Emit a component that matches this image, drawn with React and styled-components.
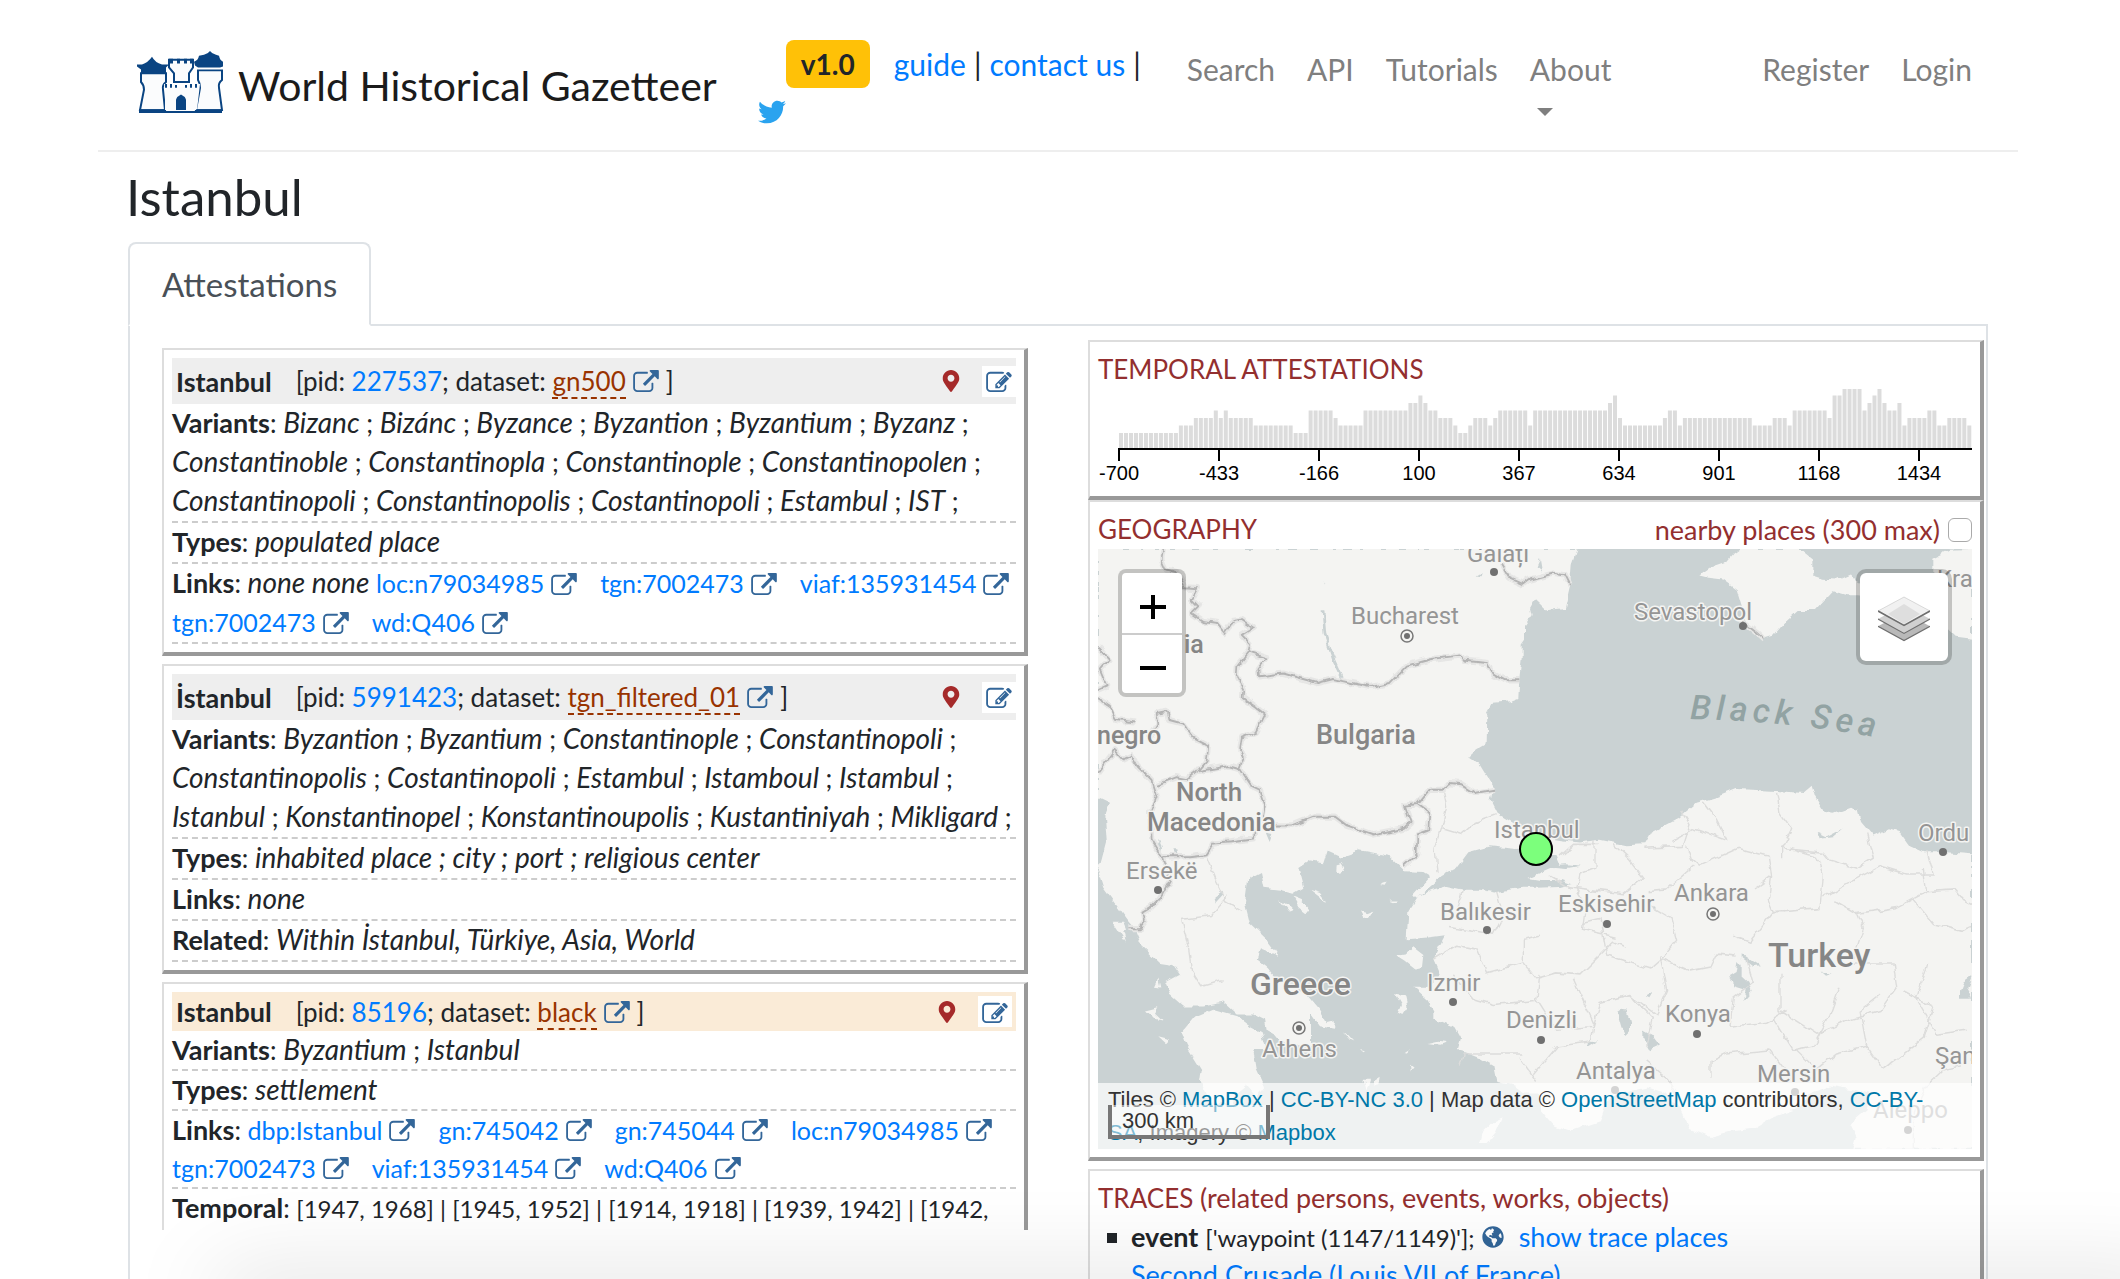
import React from "react";
import styled, { createGlobalStyle, css } from "styled-components";
import { FaTwitter, FaMapMarkerAlt, FaGlobeAmericas } from "react-icons/fa";

const GlobalStyle = createGlobalStyle`
  *, *::before, *::after { box-sizing: border-box; }
  body {
    margin: 0;
    background: #fff;
    color: #212529;
    font-family: Lato, "Noto Sans", sans-serif;
    font-size: 26px;
    line-height: 39px;
  }
  a { color: #007bff; text-decoration: none; }
  button { font: inherit; color: inherit; background: none; border: 0; padding: 0; cursor: pointer; }
  h1, h2, p, ul { margin: 0; padding: 0; font-weight: 400; }
`;

const Page = styled.div`
  height: 100vh;
  overflow: hidden;
  padding: 0 102px 0 98px;
  display: flex;
  flex-direction: column;
`;

/* ---------- header ---------- */

const Header = styled.header`
  flex: none;
  display: flex;
  align-items: flex-start;
  height: 152px;
  padding: 40px 46px 0 38px;
  border-bottom: 2px solid #eee;
`;

const Brand = styled.a`
  display: flex;
  align-items: flex-start;
  gap: 14px;
  padding-top: 10px;
  color: #1b1b1b;
  font-size: 41px;
  line-height: 72px;
  white-space: nowrap;
`;

const Meta = styled.div`
  display: flex;
  flex-direction: column;
  margin-left: 41px;
  font-size: 30px;
`;

const MetaLine = styled.div`
  display: flex;
  align-items: center;
  gap: 8px;
  height: 48px;
  padding-left: 28px;
  white-space: nowrap;
`;

const Version = styled.span`
  width: 84px;
  margin-right: 16px;
  border-radius: 8px;
  background: #ffc107;
  font-size: 28px;
  font-weight: 700;
  line-height: 48px;
  text-align: center;
`;

const TwitterLink = styled.a`
  display: flex;
  margin-top: 10px;
  color: #2aa3ef;
  font-size: 28px;
`;

const Nav = styled.nav`
  display: flex;
  flex: 1;
  gap: 32px;
  margin-left: 46px;
  padding-top: 10px;
  font-size: 30px;
  white-space: nowrap;
`;

const NavLink = styled.a`
  color: #7f7f7f;
  ${(p) => p.$pushed && css`margin-left: auto;`}
`;

const NavToggle = styled.button`
  display: flex;
  flex-direction: column;
  align-items: flex-start;
  color: #7f7f7f;
  line-height: 39px;
  &::after {
    content: "";
    margin: 19px 0 0 7px;
    border: 8px solid transparent;
    border-top-color: #7f7f7f;
    border-bottom: 0;
  }
`;

/* ---------- page body ---------- */

const PageTitle = styled.h1`
  flex: none;
  padding: 16px 28px 0;
  font-size: 51px;
  line-height: 58px;
`;

const Tabs = styled.div`
  flex: none;
  display: flex;
  margin: 16px 30px 0;
  border-bottom: 2px solid #dee2e6;
`;

const Tab = styled.button`
  height: 84px;
  margin-bottom: -2px;
  padding: 0 32px;
  border: 2px solid #dee2e6;
  border-bottom-color: #fff;
  border-radius: 8px 8px 0 0;
  background: #fff;
  color: #495057;
  font-size: 33px;
`;

const TabPanel = styled.main`
  flex: 1;
  display: grid;
  grid-template-columns: 866fr 896fr;
  align-items: start;
  column-gap: 60px;
  min-height: 0;
  margin: 0 30px;
  padding: 0 2px 0 32px;
  border: 2px solid #dee2e6;
  border-width: 0 2px;
`;

const Records = styled.section`
  display: flex;
  flex-direction: column;
  gap: 8px;
  max-height: calc(100vh - 397px);
  margin-top: 22px;
  overflow: hidden;
`;

const Card = styled.article`
  flex: none;
  padding: 8px;
  border: solid #999;
  border-width: 2px 4px 4px 2px;
  border-top-color: #ddd;
  border-left-color: #ddd;
  background: #fff;
  line-height: ${(p) => (p.$core ? 38 : 39)}px;
`;

const RecordHead = styled.header`
  display: flex;
  align-items: center;
  height: ${(p) => (p.$core ? 39 : 46)}px;
  padding: 0 ${(p) => (p.$core ? 4 : 0)}px 0 4px;
  background: ${(p) => (p.$core ? "#faebd7" : "#eee")};
  white-space: nowrap;
`;

const Name = styled.h2`
  margin-right: 24px;
  font-size: 27px;
  font-weight: 700;
`;

const DatasetLink = styled.a`
  color: #993300;
  border-bottom: 2px dashed #993300;
`;

const Actions = styled.div`
  display: flex;
  align-items: center;
  gap: 20px;
  margin-left: auto;
  color: #a52a2a;
  font-size: 22px;
  line-height: 0;
`;

const EditButton = styled.button`
  display: flex;
  align-items: center;
  justify-content: center;
  width: 34px;
  height: 31px;
  background: #fff;
`;

const Row = styled.div`
  min-height: ${(p) => (p.$open ? 80 : 40)}px;
  border-bottom: 2px dashed #ccc;
`;

const Line = styled.p`
  display: flex;
  gap: ${(p) => (p.$links ? 23 : 7)}px;
  white-space: nowrap;
`;

const Label = styled.b`
  font-size: 27px;
  font-weight: 700;
  line-height: 1;
`;

const Value = styled.i`
  font-size: 28px;
  line-height: 1;
`;

const Spans = styled.span`
  font-size: 24px;
  line-height: 1;
`;

const OutLink = styled.a`
  display: inline-flex;
  align-items: center;
  gap: 7px;
  font-size: 25px;
`;

/* ---------- right column ---------- */

const Side = styled.section`
  display: flex;
  flex-direction: column;
  margin-top: 14px;
`;

const Block = styled(Card)`
  margin-top: ${(p) => (p.$apart ? 8 : 0)}px;
`;

const BlockHead = styled.div`
  display: flex;
  align-items: center;
  justify-content: space-between;
  color: #932f2f;
`;

const BlockTitle = styled.h2`
  font-size: 26px;
`;

const BlockNote = styled.span`
  font-size: 27px;
  line-height: 1;
`;

const Nearby = styled.label`
  display: flex;
  align-items: center;
  gap: 8px;
  font-size: 27px;
`;

const Check = styled.input`
  appearance: none;
  width: 24px;
  height: 24px;
  margin: 0;
  border: 1px solid #aaa;
  border-radius: 6px;
  background: #fff;
`;

const ChartSvg = styled.svg`
  display: block;
  width: 100%;
  height: 99px;
  font: 20px "Liberation Sans", Arial, sans-serif;
`;

const MapFrame = styled.div`
  position: relative;
  height: 600px;
  overflow: hidden;
  background: #cad2d3;
  font: 22px/33px "Liberation Sans", Arial, sans-serif;
`;

const MapSvg = styled.svg`
  display: block;
  width: 100%;
  height: 100%;
  font-family: Roboto, "Noto Sans", sans-serif;
`;

const MapControl = styled.div`
  position: absolute;
  top: 20px;
  ${(p) => (p.$right ? "right: 20px;" : "left: 20px;")}
  border: 4px solid rgba(0, 0, 0, 0.2);
  border-radius: ${(p) => (p.$right ? 10 : 8)}px;
  background: #fff;
  background-clip: padding-box;
`;

const ZoomButton = styled.button`
  display: flex;
  align-items: center;
  justify-content: center;
  width: 60px;
  height: 60px;
  padding: 8px 0 0 2px;
  & + & { border-top: 2px solid #ccc; }
`;

const LayersButton = styled.button`
  display: flex;
  align-items: center;
  justify-content: center;
  width: 88px;
  height: 88px;
`;

const Attribution = styled.div`
  position: absolute;
  left: 0;
  right: 0;
  bottom: 0;
  padding: 0 10px;
  background: rgba(255, 255, 255, 0.7);
  color: #333;
  a { color: #0078a8; }
`;

const ScaleBar = styled.div`
  position: absolute;
  left: 10px;
  bottom: 10px;
  width: 162px;
  height: 34px;
  padding: 0 10px;
  border: 4px solid #777;
  border-top: 0;
  background: rgba(255, 255, 255, 0.5);
  color: #333;
  line-height: 32px;
`;

const Traces = styled.ul`
  padding-left: 33px;
  list-style: none;
`;

const Trace = styled.li`
  font-size: 27px;
  line-height: 38px;
  white-space: nowrap;
`;

const TraceLine = styled.div`
  display: flex;
  align-items: center;
  gap: 7px;
  &::before {
    content: "";
    width: 10px;
    height: 10px;
    margin: 2px 7px 0 -24px;
    background: #212529;
  }
  svg { color: #336699; font-size: 22px; }
`;

const TraceDetail = styled.span`
  font-size: 24px;
  line-height: 1;
`;

const TraceShow = styled.a`
  margin-left: 8px;
`;

const BottomShade = styled.div`
  position: fixed;
  left: 216px;
  right: -60px;
  bottom: -40px;
  height: 40px;
  box-shadow: 0 0 90px rgba(0, 0, 0, 0.17);
  pointer-events: none;
`;

/* ---------- icons ---------- */

const ExternalIcon = () => (
  <svg width="26" height="22" viewBox="0 0 1792 1536" fill="#336699" aria-hidden="true">
    <path d="M1408 928v320q0 119-84.500 203.500t-203.500 84.500h-832q-119 0-203.500-84.500t-84.500-203.500v-832q0-119 84.500-203.500t203.500-84.500h704q14 0 23 9t9 23v64q0 14-9 23t-23 9h-704q-66 0-113 47t-47 113v832q0 66 47 113t113 47h832q66 0 113-47t47-113v-320q0-14 9-23t23-9h64q14 0 23 9t9 23zm384-864v512q0 26-19 45t-45 19-45-19l-176-176-652 652q-10 10-23 10t-23-10l-114-114q-10-10-10-23t10-23l652-652-176-176q-19-19-19-45t19-45 45-19h512q26 0 45 19t19 45z" />
  </svg>
);

const EditIcon = () => (
  <svg width="26" height="22" viewBox="0 0 1792 1536" fill="#336699" aria-hidden="true">
    <path d="M888 1184l116-116-152-152-116 116v56h96v96h56zm440-720q-16-16-33 1l-350 350q-17 17-1 33t33-1l350-350q17-17 1-33zm80 594v190q0 119-84.500 203.500t-203.500 84.500h-832q-119 0-203.500-84.500t-84.500-203.500v-832q0-119 84.500-203.500t203.500-84.500h832q63 0 117 25 15 7 18 23 3 17-9 29l-49 49q-14 14-32 8-23-6-45-6h-832q-66 0-113 47t-47 113v832q0 66 47 113t113 47h832q66 0 113-47t47-113v-126q0-13 9-22l64-64q15-15 35-7t20 29zm-96-738l288 288-672 672h-288v-288zm444 132l-92 92-288-288 92-92q28-28 68-28t68 28l152 152q28 28 28 68t-28 68z" />
  </svg>
);

const CastleLogo = () => (
  <svg width="88" height="64" viewBox="0 0 88 66" preserveAspectRatio="none" aria-hidden="true">
    <g fill="#fbfcfd" stroke="#0a4482" strokeWidth="2">
      <path d="M5 24h25v9q-4 3-3 8l2 21H4l4-21q0-5-3-8z" />
      <path d="M62 21h24v10q-4 3-3 8l3 23H60l4-23q0-5-2-8z" />
      <path d="M33 10h24v8l-4 6v9H38v-9l-5-6z" />
    </g>
    <path d="M29 41l-1-6h4v4h5v-4h4v3h9v-3h4v4h5v-4h5l-3 27H29z" fill="#fbfcfd" />
    <path d="M30 35v4M35 35v4M40 36v3M50 36v3M55 35v4M60 35v4" stroke="#0a4482" strokeWidth="2" />
    <g fill="#0a4482">
      <path d="M1 15h5q6-2 10-8 3 6 10 8h7l-3 3v6H5v-4l-4-3z" />
      <path d="M58 12q4-1 5-6l5-1q4-1 6-4 2 3 6 4l3 1q1 5 4 6v5l-3 1H62l-3-2z" />
      <path d="M33 9h4v5h-4zM41 9h3v5h-3zM48 9h3v5h-3zM54 9h3v5h-3z" />
      <path d="M40 62V51q1-3 5-5 4 2 5 5v11z" />
      <path d="M3 61h26v4H3zM60 61h26v4H60zM3 63h83v2H3z" />
    </g>
  </svg>
);

const LayersIcon = () => (
  <svg width="52" height="52" viewBox="0 0 26 26" aria-hidden="true">
    <g stroke="#6f6f6f" strokeWidth="0.600">
      <path d="M0 17.600l13-7 13 7-13 7.200z" fill="#b9b9b9" stroke="none" />
      <path d="M0 17.600l13 7.200 13-7.200" fill="none" />
      <path d="M0 14l13-7 13 7-13 7.200z" fill="#d0d0d0" stroke="none" />
      <path d="M0 14l13 7.200L26 14" fill="none" />
      <path d="M0 10l13-7 13 7-13 7.200z" fill="#f1f1f1" stroke="#aaa" strokeWidth="0.200" />
      <path d="M5 11.500l8-5 8 5-8 5z" fill="#dedede" stroke="none" />
      <path d="M0 10l13 7.200L26 10" fill="none" strokeWidth="0.800" />
    </g>
  </svg>
);

/* ---------- temporal chart ---------- */

// [count, level] runs, one bar for each step of the time line
const RUNS = [
  [12, 2], [3, 3], [4, 4], [1, 5], [1, 4], [1, 5], [5, 4], [8, 3], [3, 2], [5, 5], [1, 4], [5, 3],
  [9, 5], [2, 6], [1, 7], [1, 6], [2, 5], [3, 4], [1, 3], [2, 2], [1, 3], [3, 4], [1, 3], [1, 4],
  [6, 5], [1, 3], [15, 5], [1, 6], [1, 7], [1, 4], [8, 3], [1, 4], [2, 5], [1, 3], [14, 4], [4, 3],
  [3, 4], [1, 3], [7, 5], [1, 4], [2, 7], [4, 8], [1, 5], [1, 6], [1, 7], [1, 8], [1, 6], [2, 5],
  [1, 6], [1, 3], [4, 4], [2, 5], [2, 3], [4, 4], [1, 3],
];
const LEVELS = RUNS.flatMap(([count, level]) => Array(count).fill(level));
const TICKS = ["-700", "-433", "-166", "100", "367", "634", "901", "1168", "1434"];

const TemporalChart = () => (
  <ChartSvg viewBox="0 0 874 99">
    {LEVELS.map((level, i) => (
      <rect key={i} x={21 + i * 4.99} y={59 - level * 7.5} width="4" height={level * 7.5} fill="#dcdcdc" />
    ))}
    <rect x="20" y="59" width="854" height="2" />
    {TICKS.map((tick, i) => (
      <g key={tick}>
        <rect x={20 + i * 100} y="59" width="2" height="13" />
        <text x={21 + i * 100} y="91" textAnchor="middle">{tick}</text>
      </g>
    ))}
  </ChartSvg>
);

/* ---------- map ---------- */

const LAND = [
  // Balkans and mainland Greece
  "M54 23H1490L1475 60 1470 115 1455 172 1400 178 1365 150 1350 172 1355 190 1335 215 1335 250 1325 262 1325 300 1318 350 1315 400 1290 408 1240 412 1222 440 1220 515 1190 530 1165 550 1200 570 1240 625 1232 660 1250 690 1300 715 1368 745 1372 778 1310 782 1230 775 1165 790 1130 830 1085 850 1060 870 1010 905 1000 897 1050 850 1030 840 975 838 930 800 840 785 780 803 740 788 730 815 690 810 655 830 670 880 640 895 600 885 550 880 540 840 505 855 495 920 510 970 560 1010 600 1055 540 1035 530 1060 560 1080 600 1120 680 1150 720 1190 740 1220 765 1215 762 1236 720 1230 690 1195 690 1285 620 1270 560 1240 555 1215 520 1200 470 1200 430 1170 370 1180 310 1180 270 1150 255 1120 300 1100 280 1075 240 1070 190 1030 170 990 140 960 70 880 55 840 80 760 75 700 90 665 54 650Z",
  // Peloponnese
  "M305 1245L340 1210 400 1188 470 1205 510 1230 545 1245 562 1290 520 1290 530 1340 555 1385 530 1410 500 1380 470 1400 455 1440 425 1420 400 1432 380 1410 360 1370 365 1340 320 1280Z",
  // Anatolia
  "M2676 795L2600 790 2530 790 2490 775 2460 740 2430 732 2380 750 2340 710 2330 680 2310 675 2260 690 2230 685 2205 650 2195 622 2170 640 2090 635 1970 630 1910 650 1850 665 1800 700 1710 740 1690 770 1640 772 1560 758 1500 765 1450 760 1385 752 1378 785 1430 800 1440 820 1400 835 1345 855 1380 860 1440 860 1475 870 1440 878 1370 880 1330 880 1290 885 1240 892 1200 885 1150 885 1100 875 1060 885 1015 900 985 940 980 1010 1050 1005 1095 1000 1070 1040 1060 1060 1080 1100 1050 1130 1000 1130 1040 1160 1060 1190 1060 1210 1120 1230 1140 1260 1130 1290 1170 1300 1200 1310 1240 1330 1250 1370 1300 1380 1330 1400 1380 1400 1380 1440 1420 1480 1470 1495 1560 1470 1580 1420 1620 1400 1700 1385 1760 1400 1800 1440 1830 1490 1890 1510 1960 1495 2020 1490 2080 1460 2150 1440 2190 1400 2250 1380 2320 1390 2370 1400 2360 1440 2310 1475 2330 1510 2320 1540 2676 1540Z",
  // Crimea and the Kuban coast
  "M1855 90L1890 70 1940 55 1960 35 1980 23 2160 23 2200 50 2200 90 2230 98 2270 100 2310 85 2340 112 2420 115 2470 120 2520 150 2560 160 2560 45 2610 25 2676 23 2676 250 2630 245 2600 220 2520 190 2420 150 2340 140 2300 140 2260 130 2205 180 2150 180 2110 210 2080 240 2040 250 2010 230 1990 180 1970 125 1930 100 1880 95Z",
  // islands
  "M600 912l20 8 20 18-12 4zM640 905l25 8 25 26-12 2-22-14zM690 885l30 8 18 20-10-4zM770 820l15-2 8 12-10 14-14-8zM840 940l25 4 18-6-12 16-20 2zM925 912h25l-5 6zM900 870l20-6-6 8zM950 1050l30-4 20-16 30 20-4 30-20 4-30-20zM945 1150l30 4 8 30-16 20-14-6 10-22zM785 1240l20 12 15 14-10-4zM1045 1275l30-6 26 4-20 6zM850 1365l20 0-10 30zM880 1370l22-12-4 24-14 2zM970 1295l20-6-10 8zM1200 1525l10-30 30-25 25-10-20 40-25 25zM98 968l30 0 10 20-8 6 8 25-20-25zM195 1190l40-8-10 14 25 20-30-6zM225 1130l10-18 6 20zM235 1255l35 8-12 10zM840 1290l18 4-8 4zM990 1330l14 10-12 4z",
];

const WATER = [
  "M1640 1190l10 30 0 20-14 12-12-20-12-36 14-8zM1690 1240l30 14 20 22-30 12-20-30zM1518 1280l20-16 16 2-26 14zM1975 1065l10 10 0 30 20 15 10 20-25 24 10-25-40-10-10-26 20-10zM1985 1048l25 14 30 16-20 2-35-22zM2225 1092l30 2-20 6zM2640 1140l10-20 26-16-14 32 14 22-36 0zM1695 1155l20-10-10 14zM2210 740l30 12 50-22-30 22-40 4zM1390 825l70-5 40 4-40 6zM725 178l8 0 6 60 20 50 32 60-8 2-28-50-24-60zM728 105l8 6-4 2zM400 905l28-18 2 6-26 24zM236 760l10 20-4 18-10-8zM280 780l12 0 4 16-10 4zM560 740l20 4-8 20zM1370 70l10-20 6 30zM1190 90l16-8-4 10zM1720 925l12 6-8 4z",
];

const COUNTRY_LINES = [
  "M250 23L245 50 258 75 290 82 315 120 352 122 335 150 355 168 335 185 370 205 412 210 436 235 460 205 485 202 520 222 485 240 510 262 505 285 560 300 538 325 540 345 610 338 712 362 760 352 870 372 930 362 980 318 1050 302 1140 292 1150 305 1225 312 1240 338 1275 355 1318 355",
  "M505 285L472 320 470 345 490 375 488 400 530 425 555 442 530 485 485 500 480 530 492 550 478 580 445 572 355 585 380 560 385 520 340 500 310 465 265 455 260 435 230 440 235 465 210 500",
  "M54 400L90 420 110 455 165 462M54 590L105 532 130 555 155 545 175 575 215 610 230 650 212 690 215 760 245 800 330 800 380 795 405 765 455 762 520 755 520 728M230 620L290 600 320 605 350 585M478 580L510 620 540 632 555 670 548 705 570 722 635 722 700 700 765 700 800 722 880 745 975 728 992 715 975 672 1012 668 1048 632 1090 632 1110 615 1145 618 1185 640 1242 632",
  "M1012 668L1048 690 1045 735 1012 745 1010 795 970 825M245 800L270 860 240 905 210 930 190 940 195 965 180 982 145 982M54 270L92 305 70 320 60 330 80 370 54 380",
  "M1260 60L1285 95 1330 112 1345 102 1420 85 1455 90 1470 115",
  "M1985 205L2030 235 2050 250",
];

const PROVINCE_LINES = [
  "M1090 635l10 40-15 55-20 50 6 60M1085 730l60 15 40-30 65-20M445 900l-50 50-90 10 20 70 10 60 30 40 60-15M380 805l30 60 30 50 50 25",
  "M1545 760l0 70-45 15-10 40 30 40-10 60 50 10 50 10M1600 770l50 40 40 45-60 40-90-10M1690 780l120-5 20-55-25-35M1780 760l60-30 100 30-30-50-40-45M1820 775l15 35 20 15 120-45M1840 825l-80 60-60 5M2090 640l10 50 35 40-30 50 0 30M2100 780l130 10 20 20 80 20 50-25-20-60M1975 780l90 20 10 50-50 30M2075 850l-10 60 15 30 140-10 10-80-20-50-80-20M2230 905l60-30 110-50 80 20 80 0-20-60M2260 910l70 35 120-15 90-40-10-60M2540 890l80-5 20 20 36 15M1960 1000l50 15 70-75 30 0M1510 970l50-10 20 90 130 35 40-30 40-40-20-60-60-30M1380 1000l-50 10 0 60 40 40 60-15 70 5 60-50 40-35 40 15M1380 1100l-10 60 60 80 110-10 20-60 90-20 80 50 30-60-20-90M1370 1165l-130 10-60-15-60-60M1060 1060l70-35 60 10 30 60 110-25M1480 1110l60 110-10 50-100 10-70 70M1660 1160l60 50-20 70M1750 1060l80 30 60-10 20-35 60 5M2320 1070l120 0 10 60-50 60-80 20-110 40-110-60 0-90M2000 1060l20 60-60 40-10 70 110-10 60-30M2080 1210l60 80 60-10 50-80 30-70M1890 1360l0-40 50-20 130-10 70 80M2150 1290l60 50 60-40 90-20 50 60 120-80 30-80-90-40M2360 1280l-20-90 60-40M2540 1070l-30 90 60 90 90-10M2500 910l60 60 90 20 26-10M2320 1060l30-80-20-40M1250 890l20 60-30 50-130-20M1150 885l-20 60M1330 1300l-180 0-10 30M1320 1310l50 60M1700 1320l60 40 40 60",
  "M2500 1540l0-90 40-70 50-40 50-10M1440 800l40-30 80 0M1410 850l60 30 90 10",
];

const COUNTRIES = [
  [218, 195, 27, "Bulgaria"], [78, 252, 26, "North"], [49, 282, 26, "Macedonia"],
  [-1, 195, 25, "negro"], [86, 104, 25, "ia"], [152, 446, 32, "Greece"], [670, 418, 34, "Turkey"],
];

const CITIES = [
  [253, 75, "Bucharest", 309, 87, true], [369, 13, "Galați", 396, 23], [28, 330, "Ersekë", 60, 341],
  [164, 508, "Athens", 201, 479, true], [396, 289, "Istanbul"], [342, 371, "Balıkesir", 389, 381],
  [329, 442, "Izmir", 355, 453], [408, 479, "Denizli", 443, 491], [460, 363, "Eskisehir", 509, 375],
  [576, 352, "Ankara", 615, 365, true], [567, 473, "Konya", 599, 485], [478, 530, "Antalya", 517, 541],
  [659, 533, "Mersin", 697, 543], [536, 71, "Sevastopol", 645, 77], [820, 292, "Ordu", 845, 303],
  [837, 515, "Şan"], [775, 569, "Aleppo", 810, 581], [839, 38, "Kra"],
];

const MapDrawing = () => (
  <MapSvg viewBox="0 0 874 600" preserveAspectRatio="xMidYMid slice" role="img" aria-label="Map">
    <defs>
      <filter id="coast" x="0" y="0" width="100%" height="100%">
        <feTurbulence type="fractalNoise" baseFrequency="0.090" numOctaves="2" seed="4" result="n" />
        <feDisplacementMap in="SourceGraphic" in2="n" scale="7" xChannelSelector="R" yChannelSelector="G" />
      </filter>
      <path id="sea" d="M592 170q100 2 195 20" />
    </defs>
    <g filter="url(#coast)">
      <rect width="874" height="600" fill="#cad2d3" />
      <g transform="scale(0.33333 0.39541) translate(-54 -23)" strokeLinejoin="round" fill="none">
        {LAND.map((d) => <path key={d} d={d} fill="#f4f4f2" />)}
        {WATER.map((d) => <path key={d} d={d} fill="#cad2d3" />)}
        {PROVINCE_LINES.map((d) => <path key={d} d={d} stroke="#dcdcdb" strokeWidth="4" />)}
        {COUNTRY_LINES.map((d) => <path key={d} d={d} stroke="#e6e6e5" strokeWidth="16" />)}
        {COUNTRY_LINES.map((d) => <path key={d} d={d} stroke="#b4b4b4" strokeWidth="5" />)}
      </g>
    </g>
    <g stroke="#f4f4f2" strokeWidth="3" paintOrder="stroke" strokeLinejoin="round">
      {CITIES.map(([x, y, name]) => <text key={name} x={x} y={y} fontSize="24" fill="#959595">{name}</text>)}
      {COUNTRIES.map(([x, y, size, name]) => (
        <text key={name} x={x} y={y} fontSize={size} fontWeight="500" fill="#868686">{name}</text>
      ))}
    </g>
    {CITIES.filter((c) => c[3]).map(([, , name, x, y, capital]) => (
      <g key={name}>
        {capital && <circle cx={x} cy={y} r="6" fill="#f4f4f2" stroke="#777" strokeWidth="1.500" />}
        <circle cx={x} cy={y} r={capital ? 3 : 4} fill="#707070" />
      </g>
    ))}
    <text fontSize="34" fontStyle="italic" fontWeight="500" letterSpacing="5" fill="#92a3a3">
      <textPath href="#sea">Black Sea</textPath>
    </text>
    <circle cx="438" cy="300" r="16" fill="#7cff7c" stroke="#000" strokeWidth="2" />
  </MapSvg>
);

/* ---------- records ---------- */

const Out = ({ children }) => (
  <OutLink href="#">{children}<ExternalIcon /></OutLink>
);

const Names = ({ label, lines }) => (
  <Row>
    {lines.map((names, i) => (
      <Line key={i}>
        <span>
          {i === 0 && <><Label>{label}</Label>: </>}
          {names.map((name, n) => (
            <React.Fragment key={name}>
              <Value>{name}</Value>
              {(n < names.length - 1 || lines.length > 1) && " ; "}
            </React.Fragment>
          ))}
        </span>
      </Line>
    ))}
  </Row>
);

const Field = ({ label, children }) => (
  <Row><Line><span><Label>{label}</Label>: <Value>{children}</Value></span></Line></Row>
);

const Links = ({ none, lines }) => (
  <Row>
    {lines.map((links, i) => (
      <Line key={i} $links>
        {links.map((link, n) =>
          i === 0 && n === 0 ? (
            <span key={link}><Label>Links</Label>: {none && <Value>{none} </Value>}<Out>{link}</Out></span>
          ) : (
            <Out key={link}>{link}</Out>
          )
        )}
      </Line>
    ))}
  </Row>
);

const Record = ({ name, pid, dataset, core, children }) => (
  <Card $core={core}>
    <RecordHead $core={core}>
      <Name>{name}</Name>
      <Line>
        <span>[pid: <a href="#">{pid}</a>; dataset: <DatasetLink href="#">{dataset}</DatasetLink></span>
        <OutLink href="#" aria-label="Open dataset"><ExternalIcon /></OutLink>
        <span>]</span>
      </Line>
      <Actions>
        <FaMapMarkerAlt />
        <EditButton aria-label="Edit"><EditIcon /></EditButton>
      </Actions>
    </RecordHead>
    {children}
  </Card>
);

export default function App() {
  return (
    <Page>
      <GlobalStyle />
      <Header>
        <Brand href="#"><CastleLogo />World Historical Gazetteer</Brand>
        <Meta>
          <MetaLine>
            <Version>v1.0</Version>
            <a href="#">guide</a><span>|</span><a href="#">contact us</a><span>|</span>
          </MetaLine>
          <TwitterLink href="#" aria-label="Twitter"><FaTwitter /></TwitterLink>
        </Meta>
        <Nav>
          <NavLink href="#">Search</NavLink>
          <NavLink href="#">API</NavLink>
          <NavLink href="#">Tutorials</NavLink>
          <NavToggle>About</NavToggle>
          <NavLink href="#" $pushed>Register</NavLink>
          <NavLink href="#">Login</NavLink>
        </Nav>
      </Header>
      <PageTitle>Istanbul</PageTitle>
      <Tabs role="tablist"><Tab role="tab" aria-selected="true">Attestations</Tab></Tabs>
      <TabPanel>
        <Records>
          <Record name="Istanbul" pid="227537" dataset="gn500">
            <Names label="Variants" lines={[
              ["Bizanc", "Bizánc", "Byzance", "Byzantion", "Byzantium", "Byzanz"],
              ["Constantinoble", "Constantinopla", "Constantinople", "Constantinopolen"],
              ["Constantinopoli", "Constantinopolis", "Costantinopoli", "Estambul", "IST"],
            ]} />
            <Field label="Types">populated place</Field>
            <Links none="none none" lines={[["loc:n79034985", "tgn:7002473", "viaf:135931454"], ["tgn:7002473", "wd:Q406"]]} />
          </Record>
          <Record name="İstanbul" pid="5991423" dataset="tgn_filtered_01">
            <Names label="Variants" lines={[
              ["Byzantion", "Byzantium", "Constantinople", "Constantinopoli"],
              ["Constantinopolis", "Costantinopoli", "Estambul", "Istamboul", "Istambul"],
              ["Istanbul", "Konstantinopel", "Konstantinoupolis", "Kustantiniyah", "Mikligard"],
            ]} />
            <Field label="Types">inhabited place ; city ; port ; religious center</Field>
            <Field label="Links">none</Field>
            <Field label="Related">Within İstanbul, Türkiye, Asia, World</Field>
          </Record>
          <Record name="Istanbul" pid="85196" dataset="black" core>
            <Names label="Variants" lines={[["Byzantium", "Istanbul"]]} />
            <Field label="Types">settlement</Field>
            <Links lines={[["dbp:Istanbul", "gn:745042", "gn:745044", "loc:n79034985"], ["tgn:7002473", "viaf:135931454", "wd:Q406"]]} />
            <Row $open>
              <Line>
                <span><Label>Temporal</Label>: <Spans>[1947, 1968] | [1945, 1952] | [1914, 1918] | [1939, 1942] | [1942,</Spans></span>
              </Line>
            </Row>
          </Record>
        </Records>
        <Side>
          <Block>
            <BlockHead><BlockTitle>TEMPORAL ATTESTATIONS</BlockTitle></BlockHead>
            <TemporalChart />
          </Block>
          <Block>
            <BlockHead>
              <BlockTitle>GEOGRAPHY</BlockTitle>
              <Nearby>nearby places (300 max)<Check type="checkbox" /></Nearby>
            </BlockHead>
            <MapFrame>
              <MapDrawing />
              <MapControl>
                <ZoomButton aria-label="Zoom in">
                  <svg width="26" height="26" viewBox="0 0 26 26"><path d="M0 13h26M13 1v24" stroke="#000" strokeWidth="4" /></svg>
                </ZoomButton>
                <ZoomButton aria-label="Zoom out">
                  <svg width="26" height="26" viewBox="0 0 26 26"><path d="M0 13h26" stroke="#000" strokeWidth="4" /></svg>
                </ZoomButton>
              </MapControl>
              <MapControl $right>
                <LayersButton aria-label="Layers"><LayersIcon /></LayersButton>
              </MapControl>
              <Attribution>
                Tiles © <a href="#">MapBox</a> | <a href="#">CC-BY-NC 3.0</a> | Map data © <a href="#">OpenStreetMap</a> contributors, <a href="#">CC-BY-<br />SA</a>, Imagery © <a href="#">Mapbox</a>
              </Attribution>
              <ScaleBar>300 km</ScaleBar>
            </MapFrame>
          </Block>
          <Block $apart>
            <BlockHead>
              <BlockTitle>TRACES <BlockNote>(related persons, events, works, objects)</BlockNote></BlockTitle>
            </BlockHead>
            <Traces>
              <Trace>
                <TraceLine>
                  <span><Label>event</Label> <TraceDetail>['waypoint (1147/1149)'];</TraceDetail></span>
                  <FaGlobeAmericas />
                  <TraceShow href="#">show trace places</TraceShow>
                </TraceLine>
                <a href="#">Second Crusade (Louis VII of France)</a>
              </Trace>
            </Traces>
          </Block>
        </Side>
      </TabPanel>
      <BottomShade />
    </Page>
  );
}
